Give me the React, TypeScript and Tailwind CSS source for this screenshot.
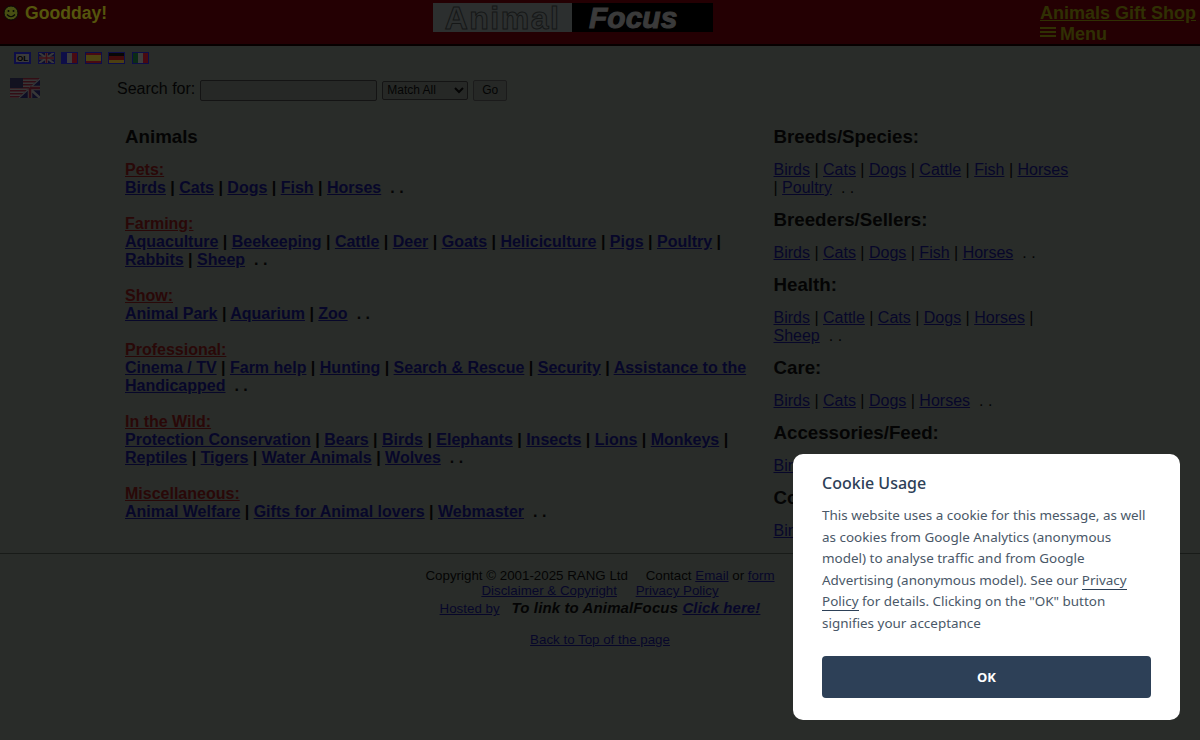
const sans = "font-['Liberation_Sans',Arial,sans-serif]";

const FlagBox = ({ children }: { children: React.ReactNode }) => (
  <svg width="17" height="12" viewBox="0 0 17 12" className="block">
    {children}
    <rect x="0.5" y="0.5" width="16" height="11" fill="none" stroke="#2020a0" />
  </svg>
);

const Tri = ({ a, b, c }: { a: string; b: string; c: string }) => (
  <FlagBox>
    <rect width="6" height="12" fill={a} />
    <rect x="6" width="5" height="12" fill={b} />
    <rect x="11" width="6" height="12" fill={c} />
  </FlagBox>
);

const Bands = ({ a, b, c, big }: { a: string; b: string; c: string; big?: boolean }) => (
  <FlagBox>
    <rect width="17" height="12" fill={b} />
    <rect width="17" height={big ? 3 : 4} fill={a} />
    <rect y={big ? 9 : 8} width="17" height={big ? 3 : 4} fill={c} />
  </FlagBox>
);

const Union = () => (
  <>
    <rect width="17" height="12" fill="#202060" />
    <path d="M0 0L17 12M17 0L0 12" stroke="#808080" strokeWidth="2" />
    <path d="M8.5 0V12M0 6H17" stroke="#808080" strokeWidth="3" />
    <path d="M8.5 0V12M0 6H17" stroke="#902030" strokeWidth="1.5" />
  </>
);

const Flags = () => (
  <div className="flex gap-[6.5px] pl-[14px] pt-[6px]">
    <svg width="17" height="12" viewBox="0 0 17 12" className="block">
      <rect width="17" height="12" fill="#2020a0" />
      <rect x="2" y="2" width="13" height="8" fill="#808080" />
      <text x="8.5" y="9" fontSize="8" fontWeight="bold" textAnchor="middle" fontFamily="Liberation Sans">OL</text>
    </svg>
    <FlagBox>
      <Union />
    </FlagBox>
    <Tri a="#2020a0" b="#888888" c="#a01828" />
    <Bands a="#a01828" b="#a89428" c="#a01828" big />
    <Bands a="#101010" b="#901818" c="#a88c28" />
    <Tri a="#1a6034" b="#888888" c="#a01828" />
  </div>
);

const UsUkFlag = () => (
  <svg width="30" height="20" viewBox="0 0 30 20" className="block">
    <defs>
      <clipPath id="uk-half">
        <path d="M30 0V20H8Z" />
      </clipPath>
    </defs>
    <rect width="30" height="20" fill="#7a7a7a" />
    {[0, 3, 6, 9, 12, 15, 18].map((y) => (
      <rect key={y} y={y} width="30" height="1.5" fill="#702030" />
    ))}
    <rect width="13" height="10" fill="#282848" />
    <g clipPath="url(#uk-half)">
      <rect width="30" height="20" fill="#202050" />
      <path d="M8 0L30 20M30 0L8 20" stroke="#7a7a7a" strokeWidth="2.5" />
      <path d="M20 0V20M8 10H30" stroke="#7a7a7a" strokeWidth="4.5" />
      <path d="M20 0V20M8 10H30" stroke="#702030" strokeWidth="2.5" />
    </g>
  </svg>
);

const L = ({ children }: { children: React.ReactNode }) => (
  <a href="#" className="text-[#10105c] underline">
    {children}
  </a>
);

const Links = ({ items }: { items: string[] }) => (
  <>
    {items.map((item, i) => (
      <span key={item}>
        <L>{item}</L>
        {i < items.length - 1 ? " | " : ""}
      </span>
    ))}
  </>
);

const leftGroups = [
  { title: "Pets:", items: ["Birds", "Cats", "Dogs", "Fish", "Horses"] },
  { title: "Farming:", items: ["Aquaculture", "Beekeeping", "Cattle", "Deer", "Goats", "Heliciculture", "Pigs", "Poultry", "Rabbits", "Sheep"] },
  { title: "Show:", items: ["Animal Park", "Aquarium", "Zoo"] },
  { title: "Professional:", items: ["Cinema / TV", "Farm help", "Hunting", "Search & Rescue", "Security", "Assistance to the Handicapped"] },
  { title: "In the Wild:", items: ["Protection Conservation", "Bears", "Birds", "Elephants", "Insects", "Lions", "Monkeys", "Reptiles", "Tigers", "Water Animals", "Wolves"] },
  { title: "Miscellaneous:", items: ["Animal Welfare", "Gifts for Animal lovers", "Webmaster"] },
];

const rightGroups = [
  { title: "Breeds/Species:", items: ["Birds", "Cats", "Dogs", "Cattle", "Fish", "Horses", "Poultry"] },
  { title: "Breeders/Sellers:", items: ["Birds", "Cats", "Dogs", "Fish", "Horses"] },
  { title: "Health:", items: ["Birds", "Cattle", "Cats", "Dogs", "Horses", "Sheep"] },
  { title: "Care:", items: ["Birds", "Cats", "Dogs", "Horses"] },
  { title: "Accessories/Feed:", items: ["Birds", "Cats", "Dogs"] },
  { title: "Cooperatives:", items: ["Birds", "Cats", "Dogs"] },
];

const Header = () => (
  <header className="relative flex h-[46px] justify-between border-b-2 border-[#100000] bg-[#500008] text-[#bcbc1c]">
    <div className="flex items-start pl-[3px] text-[17.6px] font-bold">
      <svg width="16" height="16" viewBox="0 0 16 16" className="mr-[6px] mt-[5px]">
        <circle cx="8" cy="8" r="7" fill="#a0b028" stroke="#111" />
        <circle cx="5.5" cy="6" r="1" fill="#111" />
        <circle cx="10.5" cy="6" r="1" fill="#111" />
        <path d="M4 9.5Q8 14 12 9.5" fill="none" stroke="#111" strokeWidth="1.2" />
      </svg>
      Goodday!
    </div>
    <div className="absolute left-[433px] top-[3px] flex h-[29px] w-[280px]">
      <div className="flex w-[139px] items-center justify-center bg-[#626868] text-[32px] font-bold tracking-[1.5px] text-[#626868] [-webkit-text-stroke:1px_#303434]">
        Animal
      </div>
      <div className="flex w-[141px] items-center bg-black pl-[17px] text-[30px] font-bold italic text-[#808080] [-webkit-text-stroke:1px_#808080]">
        Focus
      </div>
    </div>
    <div className="pr-[4px] pt-[3px] text-[18px] font-bold leading-[21px] text-[#6a6a08]">
      <a href="#" className="block underline">Animals Gift Shop</a>
      <div className="flex items-center">
        <span className="mr-[4px] flex flex-col gap-[2px] pb-[5px]">
          <i className="block h-[2px] w-[16px] bg-[#6a6a08]" />
          <i className="block h-[2px] w-[16px] bg-[#6a6a08]" />
          <i className="block h-[2px] w-[16px] bg-[#6a6a08]" />
        </span>
        Menu
      </div>
    </div>
  </header>
);

export default function App() {
  return (
    <div className={`relative h-[740px] w-[1200px] overflow-hidden bg-[#5b625b] text-[#0a0a0a] ${sans}`}>
      <Header />
      <Flags />
      <div className="relative h-[54px]">
        <div className="absolute left-[10px] top-[14px]">
          <UsUkFlag />
        </div>
        <form className="flex items-center pl-[117px] pt-[13px]">
          <label className="mb-[2px] mr-[5px] text-[16px]">Search for:</label>
          <input className="h-[21px] w-[177px] rounded-[2px] border border-[#2d2d2d] bg-[#555a55]" />
          <select className="ml-[5px] h-[19px] w-[86px] rounded-[2px] border border-[#2d2d2d] bg-[#555a55] text-[12px]">
            <option>Match All</option>
          </select>
          <button type="button" className="ml-[5px] h-[21px] w-[34px] rounded-[2px] border border-[#3d3d3d] bg-[#555a55] text-[12px]">Go</button>
        </form>
      </div>
      <main className="flex h-[436px] border-b border-[#373c37] pt-[8px]">
        <div className="ml-[125px] w-[625px]">
          <h2 className="mb-[13px] text-[18.72px] font-bold leading-[22px]">Animals</h2>
          {leftGroups.map((g) => (
            <div key={g.title} className="mb-[18px] text-[16px] font-bold leading-[18px]">
              <div className="text-[#5c1212] underline">{g.title}</div>
              <Links items={g.items} />
              <span className="ml-[9px]">. .</span>
            </div>
          ))}
        </div>
        <div className="ml-[23.5px] w-[300px] text-[16px] leading-[18px]">
          {rightGroups.map((g) => (
            <div key={g.title} className="mb-[12px]">
              <h3 className="mb-[13px] text-[18.72px] font-bold leading-[22px]">{g.title}</h3>
              <Links items={g.items} />
              <span className="ml-[9px]">. .</span>
            </div>
          ))}
        </div>
      </main>
      <footer className="pt-[14px] text-center text-[13.33px] leading-[15px]">
        <div>
          Copyright © 2001-2025 RANG Ltd <span className="ml-[14px]">Contact</span> <L>Email</L> or <L>form</L>
        </div>
        <div>
          <L>Disclaimer &amp; Copyright</L> <span className="ml-[15px]"><L>Privacy Policy</L></span>
        </div>
        <div className="mt-[1px] leading-[18px]">
          <L>Hosted by</L>
          <b className="ml-[12px] text-[15px] italic tracking-[0.12px]">
            To link to AnimalFocus <L>Click here!</L>
          </b>
        </div>
        <div className="mt-[14px]">
          <L>Back to Top of the page</L>
        </div>
      </footer>
      <div className="absolute inset-0 bg-black/55" />
      <div className="absolute bottom-[20px] right-[20px] h-[266px] w-[387px] rounded-[10px] bg-white px-[29px] pt-[17px] font-['Noto_Sans',sans-serif] text-[#2d4057]">
        <h4 className="text-[16px] font-medium leading-[24px]">Cookie Usage</h4>
        <p className="mt-[10px] text-[13.45px] leading-[21.5px] text-[#4a5868]">
          This website uses a cookie for this message, as well as cookies from Google Analytics (anonymous model) to analyse traffic and from Google Advertising (anonymous model). See our{" "}
          <a href="#" className="border-b border-[#2d4057] text-[#4a5868]">Privacy Policy</a> for details. Clicking on the "OK" button signifies your acceptance
        </p>
        <button type="button" className="mt-[22px] h-[42px] w-[329px] rounded-[4px] bg-[#2d4057] pt-[1px] text-[13px] font-bold text-white">OK</button>
      </div>
    </div>
  );
}
